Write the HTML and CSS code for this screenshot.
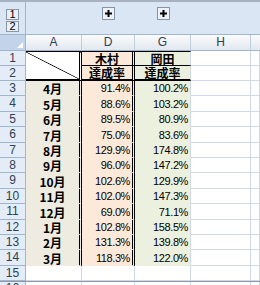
FILE: index.html
```html
<!DOCTYPE html>
<html lang="ja">
    <head>
        <meta charset="UTF-8">
        <title>達成率</title>
        <link rel="stylesheet" href="styles.css">
    </head>
    <body>
        <div class="window">
            <div class="outline-bar">
                <div class="levels">
                    <span class="level-btn">1</span>
                    <span class="level-btn">2</span>
                </div>
                <div></div>
                <div class="group-slot">
                    <span class="expand-btn"><svg width="7" height="7" viewBox="0 0 7 7"><path d="M2.5 0h2v2.5h2.5v2h-2.5v2.5h-2v-2.5h-2.5v-2h2.5z"/></svg></span>
                </div>
                <div class="group-slot">
                    <span class="expand-btn"><svg width="7" height="7" viewBox="0 0 7 7"><path d="M2.5 0h2v2.5h2.5v2h-2.5v2.5h-2v-2.5h-2.5v-2h2.5z"/></svg></span>
                </div>
                <div></div>
            </div>
            <div class="sheet">
                <div class="corner"><svg width="6" height="6" viewBox="0 0 6 6"><path d="M6 0v6h-6z" fill="#fff"/></svg></div>
                <div class="col-head">A</div>
                <div class="col-head">D</div>
                <div class="col-head">G</div>
                <div class="col-head">H</div>
                <div class="col-head col-rest"></div>

                <div class="row-head">1</div>
                <div class="cell diag"></div>
                <div class="cell name kimura top">木村</div>
                <div class="cell name okada top">岡田</div>
                <div class="cell"></div>
                <div class="cell"></div>

                <div class="row-head">2</div>
                <div class="cell name kimura under">達成率</div>
                <div class="cell name okada under">達成率</div>
                <div class="cell"></div>
                <div class="cell"></div>

                <div class="row-head">3</div>
                <div class="cell month">4月</div>
                <div class="cell num kimura">91.4%</div>
                <div class="cell num okada">100.2%</div>
                <div class="cell"></div>
                <div class="cell"></div>

                <div class="row-head">4</div>
                <div class="cell month">5月</div>
                <div class="cell num kimura">88.6%</div>
                <div class="cell num okada">103.2%</div>
                <div class="cell"></div>
                <div class="cell"></div>

                <div class="row-head">5</div>
                <div class="cell month">6月</div>
                <div class="cell num kimura">89.5%</div>
                <div class="cell num okada">80.9%</div>
                <div class="cell"></div>
                <div class="cell"></div>

                <div class="row-head">6</div>
                <div class="cell month">7月</div>
                <div class="cell num kimura">75.0%</div>
                <div class="cell num okada">83.6%</div>
                <div class="cell"></div>
                <div class="cell"></div>

                <div class="row-head">7</div>
                <div class="cell month">8月</div>
                <div class="cell num kimura">129.9%</div>
                <div class="cell num okada">174.8%</div>
                <div class="cell"></div>
                <div class="cell"></div>

                <div class="row-head">8</div>
                <div class="cell month">9月</div>
                <div class="cell num kimura">96.0%</div>
                <div class="cell num okada">147.2%</div>
                <div class="cell"></div>
                <div class="cell"></div>

                <div class="row-head">9</div>
                <div class="cell month">10月</div>
                <div class="cell num kimura">102.6%</div>
                <div class="cell num okada">129.9%</div>
                <div class="cell"></div>
                <div class="cell"></div>

                <div class="row-head">10</div>
                <div class="cell month">11月</div>
                <div class="cell num kimura">102.0%</div>
                <div class="cell num okada">147.3%</div>
                <div class="cell"></div>
                <div class="cell"></div>

                <div class="row-head">11</div>
                <div class="cell month">12月</div>
                <div class="cell num kimura">69.0%</div>
                <div class="cell num okada">71.1%</div>
                <div class="cell"></div>
                <div class="cell"></div>

                <div class="row-head">12</div>
                <div class="cell month">1月</div>
                <div class="cell num kimura">102.8%</div>
                <div class="cell num okada">158.5%</div>
                <div class="cell"></div>
                <div class="cell"></div>

                <div class="row-head">13</div>
                <div class="cell month">2月</div>
                <div class="cell num kimura">131.3%</div>
                <div class="cell num okada">139.8%</div>
                <div class="cell"></div>
                <div class="cell"></div>

                <div class="row-head">14</div>
                <div class="cell month">3月</div>
                <div class="cell num kimura">118.3%</div>
                <div class="cell num okada">122.0%</div>
                <div class="cell"></div>
                <div class="cell"></div>

                <div class="row-head">15</div>
                <div class="cell"></div>
                <div class="cell"></div>
                <div class="cell"></div>
                <div class="cell"></div>
                <div class="cell"></div>

                <div class="row-head">16</div>
                <div class="cell"></div>
                <div class="cell"></div>
                <div class="cell"></div>
                <div class="cell"></div>
                <div class="cell"></div>
            </div>
            <div class="bottom-edge"></div>
        </div>
    </body>
</html>
```

FILE: styles.css
```css
body {
    margin: 0;
    font-family: "Liberation Sans", Arial, sans-serif;
    background: #fff;
}
.window {
    position: relative;
    width: 260px;
    height: 285px;
    overflow: hidden;
    background: #fff;
}
.outline-bar {
    display: grid;
    grid-template-columns: 26px 56px 53px 56px 1fr;
    height: 35px;
    box-sizing: border-box;
    border-top: 2px solid #a7b1bf;
    border-bottom: 1px solid #9eb6ce;
    background: #dbe6f4;
}
.levels {
    display: flex;
    flex-direction: column;
    align-items: center;
    gap: 1px;
    padding-top: 7px;
    border-right: 1px solid #9eb6ce;
}
.level-btn {
    width: 13px;
    height: 11px;
    box-sizing: border-box;
    border: 1px solid #8a97a8;
    background: #e9eff8;
    font-size: 11px;
    line-height: 9px;
    text-align: center;
    color: #000;
}
.group-slot {
    display: flex;
    justify-content: center;
    padding-top: 5px;
}
.expand-btn {
    display: flex;
    align-items: center;
    justify-content: center;
    width: 13px;
    height: 13px;
    box-sizing: border-box;
    border: 1px solid #8594a6;
    background: #eef2f8;
}
.sheet {
    display: grid;
    grid-template-columns: 26px 56px 53px 56px 60px 1fr;
    grid-template-rows: 16px 15px 15px;
    grid-auto-rows: 15.4px;
}
.sheet > div {
    box-sizing: border-box;
    white-space: nowrap;
}
.corner {
    display: flex;
    align-items: flex-end;
    justify-content: flex-end;
    padding: 0 2px 2px 0;
    background: #c3d4ea;
    border-right: 1px solid #9eb6ce;
    border-bottom: 1px solid #9eb6ce;
}
.col-head {
    background: linear-gradient(#fafbfd, #e2e7ee);
    border-right: 1px solid #c0cddb;
    border-bottom: 1px solid #9eb6ce;
    text-align: center;
    font-size: 12px;
    line-height: 15px;
    color: #2d4150;
}
.col-rest {
    border-right: none;
}
.row-head {
    background: #e4ecf7;
    border-right: 1px solid #9eb6ce;
    border-bottom: 1px solid #9eb6ce;
    text-align: center;
    font-size: 12px;
    line-height: 15px;
    color: #2d4150;
}
.cell {
    display: flex;
    align-items: flex-end;
    border-right: 1px solid #d0d7e5;
    border-bottom: 1px solid #d0d7e5;
    font-size: 12px;
    line-height: 13px;
}
.diag {
    grid-row: span 2;
    border-top: 1px solid #000;
    border-bottom: 2px solid #000;
    border-right: 3px double #000;
    background: linear-gradient(to top right, #fff calc(50% - 0.7px), #000 50%, #fff calc(50% + 0.7px));
}
.name {
    justify-content: center;
    font-family: "Noto Sans CJK JP", sans-serif;
    font-weight: bold;
}
.top {
    border-top: 1px solid #000;
    border-bottom: 1px solid #000;
}
.under {
    border-bottom: 2px solid #000;
}
.month {
    justify-content: center;
    background: #eeece1;
    border-bottom-color: #eeece1;
    border-right: 3px double #000;
    font-family: "Noto Sans CJK JP", sans-serif;
    font-weight: bold;
}
.kimura {
    background: #fde9d9;
    border-right: 3px double #000;
}
.okada {
    background: #ebf1de;
}
.num {
    justify-content: flex-end;
    padding-right: 2px;
    font-size: 11px;
    letter-spacing: -0.4px;
}
.num.kimura {
    border-bottom-color: #fde9d9;
}
.num.okada {
    border-bottom-color: #ebf1de;
}
.bottom-edge {
    position: absolute;
    left: 0;
    right: 0;
    top: 281px;
    height: 1px;
    background: #8e9aab;
}
```
